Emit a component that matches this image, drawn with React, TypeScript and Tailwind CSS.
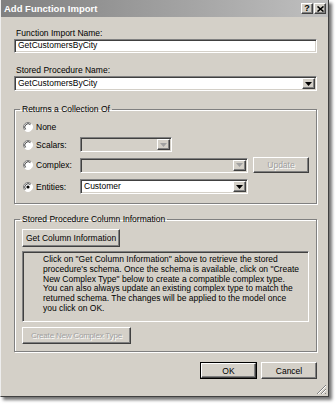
import React from 'react';

const sunken =
  'border border-t-[#808080] border-l-[#808080] border-b-white border-r-white shadow-[inset_1px_1px_0_#404040,inset_-1px_-1px_0_#d4d0c8]';
const raised =
  'border border-t-white border-l-white border-b-[#404040] border-r-[#404040] shadow-[inset_-1px_-1px_0_#808080]';

function DropArrow({ disabled = false }: { disabled?: boolean }) {
  return (
    <div className={`w-[13px] h-full flex items-center justify-center bg-[#d4d0c8] ${raised}`}>
      <svg width="7" height="4" viewBox="0 0 7 4">
        <path d="M0 0h7L3.5 4z" fill={disabled ? '#a0a0a0' : '#000'} />
      </svg>
    </div>
  );
}

function Combo({
  value,
  width,
  disabled = false,
}: {
  value?: string;
  width: string;
  disabled?: boolean;
}) {
  return (
    <div
      className={`${width} h-[15px] flex items-stretch ${sunken} p-[1px] ${
        disabled ? 'bg-[#d4d0c8]' : 'bg-white'
      }`}
    >
      <div className="flex-1 pl-[2px] leading-[11px] truncate">{value}</div>
      <DropArrow disabled={disabled} />
    </div>
  );
}

function Radio({ checked = false }: { checked?: boolean }) {
  return (
    <svg width="10" height="10" viewBox="0 0 10 10" className="shrink-0">
      <circle cx="5" cy="5" r="4.5" fill="#fff" />
      <path d="M1.8 8.2A4.5 4.5 0 0 1 8.2 1.8" stroke="#808080" fill="none" />
      <path d="M2.6 7.4A3.4 3.4 0 0 1 7.4 2.6" stroke="#404040" fill="none" />
      <path d="M8.2 1.8A4.5 4.5 0 0 1 1.8 8.2" stroke="#fff" fill="none" />
      {checked && <circle cx="5" cy="5" r="1.6" fill="#000" />}
    </svg>
  );
}

function Btn({
  children,
  width,
  height = 'h-[17px]',
  disabled = false,
  isDefault = false,
}: {
  children: React.ReactNode;
  width: string;
  height?: string;
  disabled?: boolean;
  isDefault?: boolean;
}) {
  return (
    <div className={`${width} ${height} ${isDefault ? 'border border-black' : ''} shrink-0`}>
      <div
        className={`w-full h-full flex items-center justify-center whitespace-nowrap ${raised} ${
          disabled ? 'text-[#a0a0a0] [text-shadow:1px_1px_0_#fff]' : 'text-black'
        }`}
      >
        {children}
      </div>
    </div>
  );
}

function ChoiceRow({
  label,
  checked,
  children,
}: {
  label: string;
  checked?: boolean;
  children?: React.ReactNode;
}) {
  return (
    <div className="flex items-center h-[15px]">
      <Radio checked={checked} />
      <div className="ml-[3px] w-[44px]">{label}</div>
      {children}
    </div>
  );
}

export default function App() {
  return (
    <div className="w-[336px] h-[404px] bg-white font-['Liberation_Sans',Arial,sans-serif] text-[8.5px] leading-[10px] text-black">
      <div className="relative w-[329px] h-[397px] bg-[#d4d0c8] flex flex-col border-l border-l-[#eeeeee] border-r border-r-[#404040] border-b border-b-[#404040] shadow-[3px_3px_3px_rgba(0,0,0,0.55)]">
        {/* title bar */}
        <div className="h-[17px] shrink-0 flex items-center pl-[3px] pr-[2px] bg-gradient-to-r from-[#808080] to-[#c0c0c0]">
          <div className="flex-1 text-white font-bold text-[9.5px]">Add Function Import</div>
          <div className="flex gap-[1px]">
            <div className={`w-[12px] h-[11px] bg-[#d4d0c8] flex items-center justify-center ${raised} font-bold text-[9px] leading-[9px]`}>
              ?
            </div>
            <div className={`w-[12px] h-[11px] bg-[#d4d0c8] flex items-center justify-center ${raised}`}>
              <svg width="7" height="6" viewBox="0 0 7 6">
                <path d="M0.5 0.5l6 5M6.5 0.5l-6 5" stroke="#000" strokeWidth="1.6" />
              </svg>
            </div>
          </div>
        </div>

        <div className="flex flex-col pl-[13px] pr-[11px]">
          <div className="mt-[11px] pl-[2px]">Function Import Name:</div>
          <div className={`mt-[1px] h-[14px] bg-white ${sunken} pl-[3px] leading-[11px]`}>
            GetCustomersByCity
          </div>

          <div className="mt-[12px] pl-[2px]">Stored Procedure Name:</div>
          <div className="mt-[1px]">
            <Combo value="GetCustomersByCity" width="w-full" />
          </div>

          <fieldset className="mt-[13px] border border-[#808080] shadow-[1px_1px_0_#fff,inset_1px_1px_0_#fff]">
            <legend className="ml-[5px] px-[2px]">Returns a Collection Of</legend>
            <div className="flex flex-col pl-[8px] pt-[5px] pb-[9px]">
              <ChoiceRow label="None" />
              <div className="mt-[3px]">
                <ChoiceRow label="Scalars:">
                  <Combo width="w-[92px]" disabled />
                </ChoiceRow>
              </div>
              <div className="mt-[5px] flex items-center">
                <ChoiceRow label="Complex:">
                  <Combo width="w-[168px]" disabled />
                </ChoiceRow>
                <div className="ml-[5px]">
                  <Btn width="w-[56px]" height="h-[16px]" disabled>
                    Update
                  </Btn>
                </div>
              </div>
              <div className="mt-[6px]">
                <ChoiceRow label="Entities:" checked>
                  <Combo value="Customer" width="w-[168px]" />
                </ChoiceRow>
              </div>
            </div>
          </fieldset>

          <fieldset className="mt-[10px] border border-[#808080] shadow-[1px_1px_0_#fff,inset_1px_1px_0_#fff]">
            <legend className="ml-[5px] px-[2px]">Stored Procedure Column Information</legend>
            <div className="flex flex-col px-[7px] pt-[5px] pb-[7px]">
              <Btn width="w-[98px]" height="h-[18px]">
                Get Column Information
              </Btn>
              <div className={`mt-[4px] h-[71px] ${sunken} pl-[20px] pt-[3px] leading-[9.8px]`}>
                Click on "Get Column Information" above to retrieve the stored
                <br />
                procedure's schema. Once the schema is available, click on "Create
                <br />
                New Complex Type" below to create a compatible complex type.
                <br />
                You can also always update an existing complex type to match the
                <br />
                returned schema. The changes will be applied to the model once
                <br />
                you click on OK.
              </div>
              <div className="mt-[5px]">
                <Btn width="w-[109px]" disabled>
                  <span className="text-[8px] tracking-[-0.2px]">Create New Complex Type</span>
                </Btn>
              </div>
            </div>
          </fieldset>

          <div className="mt-[10px] flex justify-end gap-[4px]">
            <Btn width="w-[57px]" isDefault>
              OK
            </Btn>
            <Btn width="w-[56px]">Cancel</Btn>
          </div>
        </div>

        <svg width="11" height="11" viewBox="0 0 11 11" className="absolute right-[1px] bottom-[1px]">
          <path d="M10 1L1 10M10 5L5 10M10 9L9 10" stroke="#808080" />
          <path d="M10 2L2 10M10 6L6 10" stroke="#fff" />
        </svg>
      </div>
    </div>
  );
}
